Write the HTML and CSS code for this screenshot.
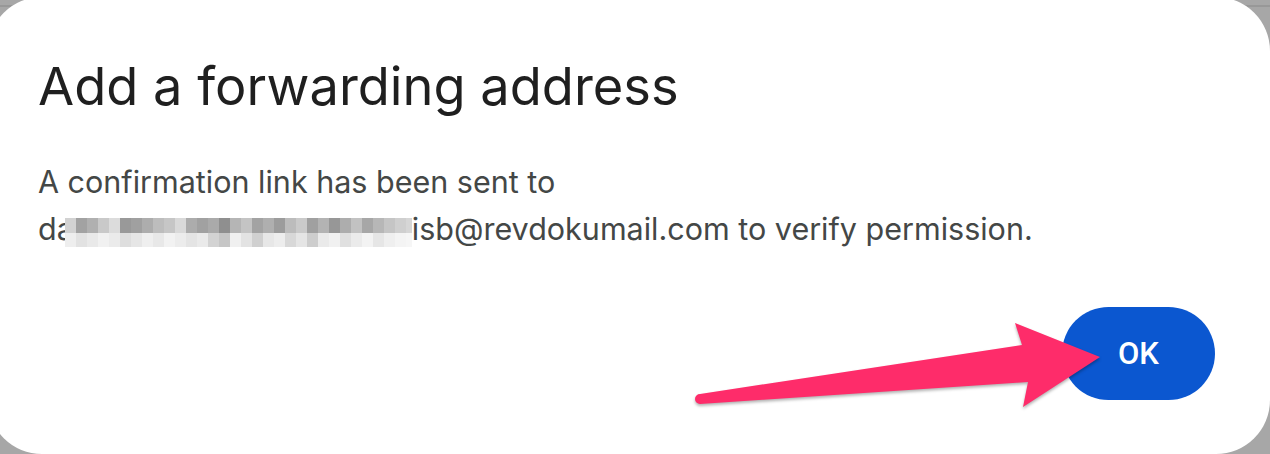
FILE: index.html
```html
<!DOCTYPE html>
<html lang="en">
<head>
<meta charset="utf-8">
<title>Add a forwarding address</title>
<link rel="stylesheet" href="styles.css">
</head>
<body>
<div class="dialog" role="dialog" aria-labelledby="dlg-title">
  <h1 class="title" id="dlg-title">Add a forwarding address</h1>
  <p class="message">A confirmation link has been sent to<br>da<span class="redacted" aria-label="redacted"></span>isb@revdokumail.com to verify permission.</p>
  <div class="actions">
    <button class="ok" type="button">OK</button>
  </div>
</div>
<svg class="arrow" width="1270" height="454" viewBox="0 0 1270 454" aria-hidden="true">
  <path d="M700 394 L1022 345 L1015 323 L1100 357 L1023 407 L1028 382 L700 404 A5 5 0 0 1 700 394 Z" fill="#fe2c6a"/>
</svg>
</body>
</html>
```
FILE: styles.css
```css
html, body {
  margin: 0;
  padding: 0;
}
body {
  position: relative;
  width: 1270px;
  height: 454px;
  overflow: hidden;
  background: linear-gradient(#a7a7a7 0 5px, #989898 5px 7px, #a7a7a7 7px);
  font-family: "Inter", "Roboto", "Liberation Sans", sans-serif;
}
.dialog {
  box-sizing: border-box;
  margin: -3px 0 0 -12px;
  width: 1282px;
  height: 457px;
  background: #ffffff;
  border-radius: 54px;
  padding: 0 55px 0 50px;
  display: flex;
  flex-direction: column;
}
.title {
  margin: 54px 0 0;
  font-size: 52.4px;
  font-weight: 400;
  line-height: 70px;
  color: #1f1f1f;
  letter-spacing: 0;
}
.message {
  margin: 37px 0 0;
  font-size: 30.5px;
  line-height: 47px;
  color: #444746;
}
.redacted {
  display: inline-block;
  margin-left: -9px;
  width: 347px;
  height: 29px;
  vertical-align: -7px;
  background:
    linear-gradient(90deg,
      #d2d2d2 0 11px, #a2a2a2 11px 22px, #b0b0b0 22px 33px, #c9c9c9 33px 44px, #dcdcdc 44px 55px,
      #999999 55px 66px, #a0a0a0 66px 77px, #adadad 77px 88px, #bdbdbd 88px 99px, #c6c6c6 99px 110px,
      #d9d9d9 110px 121px, #acacac 121px 132px, #a1a1a1 132px 143px, #aaaaaa 143px 154px, #8f8f8f 154px 165px,
      #b5b5b5 165px 176px, #c4c4c4 176px 187px, #a3a3a3 187px 198px, #afafaf 198px 209px, #9c9c9c 209px 220px,
      #bcbcbc 220px 231px, #cacaca 231px 242px, #a0a0a0 242px 253px, #b3b3b3 253px 264px, #979797 264px 275px,
      #adadad 275px 286px, #c2c2c2 286px 297px, #a7a7a7 297px 308px, #b7b7b7 308px 319px, #c5c5c5 319px 330px,
      #cfcfcf 330px 341px, #d6d6d6 341px 347px) top / 100% 15px no-repeat,
    linear-gradient(90deg,
      #eeeeee 0 11px, #e2e2e2 11px 22px, #e9e9e9 22px 33px, #f1f1f1 33px 44px, #ebebeb 44px 55px,
      #dedede 55px 66px, #e6e6e6 66px 77px, #efefef 77px 88px, #e8e8e8 88px 99px, #f2f2f2 99px 110px,
      #ececec 110px 121px, #e4e4e4 121px 132px, #eaeaea 132px 143px, #d3d3d3 143px 154px, #c6c6c6 154px 165px,
      #f0f0f0 165px 176px, #e3e3e3 176px 187px, #d0d0d0 187px 198px, #e7e7e7 198px 209px, #ededed 209px 220px,
      #d8d8d8 220px 231px, #e5e5e5 231px 242px, #cdcdcd 242px 253px, #eaeaea 253px 264px, #f1f1f1 264px 275px,
      #e0e0e0 275px 286px, #ebebeb 286px 297px, #f3f3f3 297px 308px, #e6e6e6 308px 319px, #efefef 319px 330px,
      #f4f4f4 330px 341px, #f6f6f6 341px 347px) bottom / 100% 14px no-repeat;
}
.actions {
  margin-top: auto;
  margin-bottom: 54px;
  display: flex;
  justify-content: flex-end;
}
.ok {
  width: 153px;
  height: 93px;
  border: none;
  border-radius: 47px;
  background: #0b57d0;
  color: #ffffff;
  font-family: "Roboto", "Liberation Sans", sans-serif;
  font-size: 31px;
  font-weight: 500;
  padding: 0;
  cursor: pointer;
}
.arrow {
  position: absolute;
  left: 0;
  top: 0;
  pointer-events: none;
  filter: drop-shadow(0 2px 1.5px rgba(0, 0, 0, 0.3));
}
```
